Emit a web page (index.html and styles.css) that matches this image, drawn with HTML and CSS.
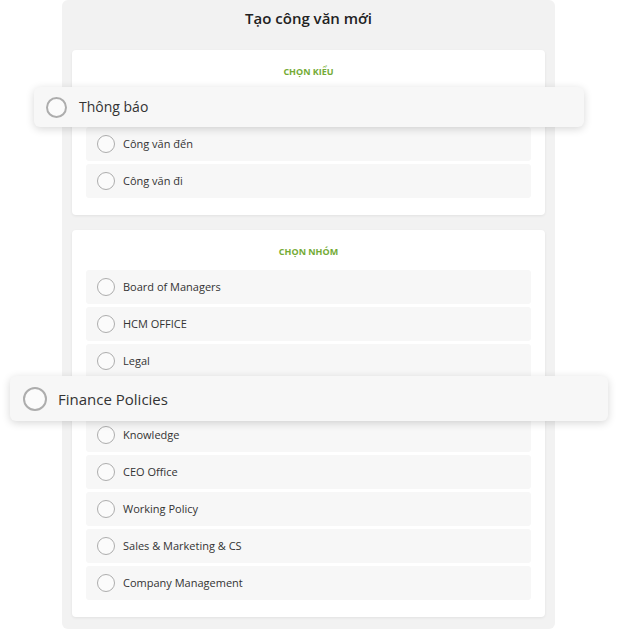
FILE: index.html
```html
<!DOCTYPE html>
<html lang="vi">
<head>
<meta charset="utf-8">
<title>Tạo công văn mới</title>
<link rel="stylesheet" href="styles.css">
</head>
<body>
<div class="stage">
  <div class="panel">
    <h1 class="panel-title">Tạo công văn mới</h1>
    <section class="card">
      <h2 class="card-title">CHỌN KIỂU</h2>
      <div class="list">
        <div class="row placeholder"></div>
        <div class="row"><span class="radio"></span><span class="label">Công văn đến</span></div>
        <div class="row"><span class="radio"></span><span class="label">Công văn đi</span></div>
      </div>
    </section>
    <section class="card card-group">
      <h2 class="card-title">CHỌN NHÓM</h2>
      <div class="list">
        <div class="row"><span class="radio"></span><span class="label">Board of Managers</span></div>
        <div class="row"><span class="radio"></span><span class="label">HCM OFFICE</span></div>
        <div class="row"><span class="radio"></span><span class="label">Legal</span></div>
        <div class="row placeholder"></div>
        <div class="row"><span class="radio"></span><span class="label">Knowledge</span></div>
        <div class="row"><span class="radio"></span><span class="label">CEO Office</span></div>
        <div class="row"><span class="radio"></span><span class="label">Working Policy</span></div>
        <div class="row"><span class="radio"></span><span class="label">Sales &amp; Marketing &amp; CS</span></div>
        <div class="row"><span class="radio"></span><span class="label">Company Management</span></div>
      </div>
    </section>
  </div>

  <div class="drag drag-type"><span class="radio"></span><span class="label">Thông báo</span></div>
  <div class="drag drag-group"><span class="radio"></span><span class="label">Finance Policies</span></div>
</div>
</body>
</html>
```

FILE: styles.css
```css
html, body {
  margin: 0;
  padding: 0;
  background: #ffffff;
}

body {
  font-family: "Open Sans", "Noto Sans", "Liberation Sans", sans-serif;
  color: #333333;
}

.stage {
  position: relative;
  width: 618px;
  height: 631px;
  overflow: hidden;
}

.panel {
  margin-left: 62px;
  width: 493px;
  box-sizing: border-box;
  background: #f2f2f2;
  border-radius: 6px;
  padding: 0 10px 12px;
  display: flex;
  flex-direction: column;
  gap: 15px;
}

.panel-title {
  margin: 0 0 -15px;
  height: 50px;
  box-sizing: border-box;
  padding-top: 7px;
  font-size: 15px;
  line-height: 22px;
  font-weight: 600;
  text-align: center;
  color: #222222;
}

.card {
  background: #ffffff;
  border-radius: 4px;
  box-shadow: 0 1px 3px rgba(0, 0, 0, 0.07);
  padding: 17px 14px 17px;
}

.card-title {
  margin: 0 0 13px;
  font-size: 9px;
  line-height: 10px;
  font-weight: 700;
  text-align: center;
  color: #74ab36;
}

.list {
  display: flex;
  flex-direction: column;
  gap: 3px;
}

.row {
  height: 34px;
  box-sizing: border-box;
  background: #f7f7f7;
  border-radius: 3px;
  display: flex;
  align-items: center;
  padding-left: 11px;
  gap: 8px;
}

.radio {
  width: 18px;
  height: 18px;
  box-sizing: border-box;
  border-radius: 50%;
  border: 1.5px solid #adadad;
  background: #fbfbfb;
  flex: none;
}

.label {
  font-size: 11px;
  line-height: 16px;
  color: #333333;
}

.drag {
  position: absolute;
  display: flex;
  align-items: center;
  box-sizing: border-box;
  background: #f7f7f7;
  border-radius: 6px;
  box-shadow: 0 2px 8px rgba(0, 0, 0, 0.16);
}

.drag-type {
  left: 34px;
  top: 87px;
  width: 550px;
  height: 40px;
  padding-left: 12px;
  gap: 12px;
}

.drag-type .radio {
  width: 21px;
  height: 21px;
  border-width: 2px;
}

.drag-type .label {
  font-size: 14px;
  line-height: 18px;
}

.drag-group {
  left: 10px;
  top: 376px;
  width: 598px;
  height: 45px;
  padding-left: 13px;
  gap: 11px;
}

.drag-group .radio {
  width: 24px;
  height: 24px;
  border-width: 2px;
}

.drag-group .label {
  font-size: 15px;
  line-height: 20px;
}
```
